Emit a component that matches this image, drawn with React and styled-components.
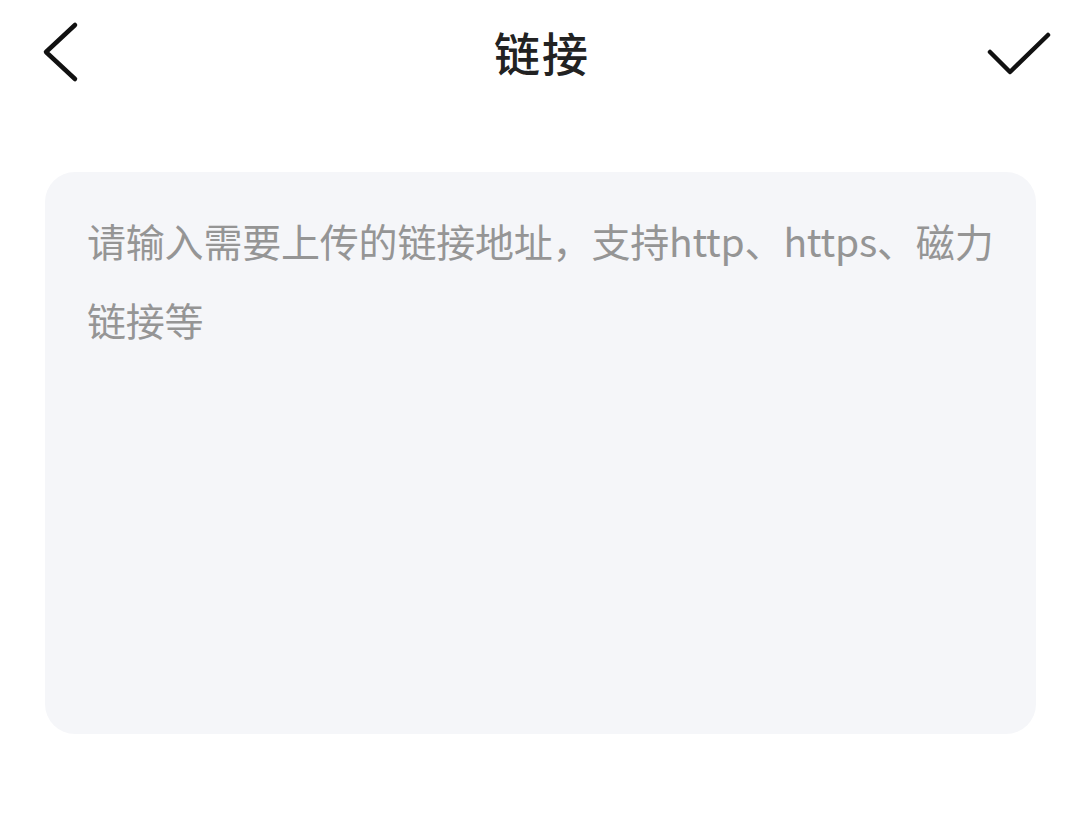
import React from "react";
import styled, { createGlobalStyle } from "styled-components";

const Global = createGlobalStyle`
  html, body { margin: 0; padding: 0; background: #ffffff; }
  body { font-family: "Noto Sans CJK SC", "Noto Sans", sans-serif; }
  * { box-sizing: border-box; }
`;

const Page = styled.div`
  width: 1080px;
  height: 830px;
  background: #ffffff;
  display: flex;
  flex-direction: column;
`;

const Header = styled.header`
  height: 106px;
  display: grid;
  grid-template-columns: 120px 1fr 120px;
  align-items: center;
  padding: 0 28px 0 40px;
`;

const IconButton = styled.button`
  border: 0;
  background: transparent;
  padding: 0;
  display: flex;
  align-items: center;
  justify-content: ${(p) => (p.$end ? "flex-end" : "flex-start")};
  color: #111111;
  cursor: pointer;
`;

const Title = styled.h1`
  margin: -5px 0 0 -8px;
  text-align: center;
  font-size: 46px;
  font-weight: 500;
  color: #222222;
  letter-spacing: 2px;
  line-height: 1;
`;

const Card = styled.div`
  margin: 66px 44px 0 45px;
  height: 562px;
  background: #f5f6f9;
  border-radius: 30px;
  padding: 29px 30px 0 42px;
  display: flex;
`;

const Input = styled.textarea`
  flex: 1;
  border: 0;
  outline: none;
  resize: none;
  background: transparent;
  padding: 0;
  font-family: "Noto Sans CJK SC", "Noto Sans", sans-serif;
  font-size: 39px;
  line-height: 79px;
  letter-spacing: -0.2px;
  color: #333333;
  &::placeholder {
    color: #959595;
    opacity: 1;
  }
`;

export default function App() {
  return (
    <Page>
      <Global />
      <Header>
        <IconButton aria-label="返回">
          <svg width="40" height="64" viewBox="0 0 40 64" fill="none">
            <path d="M35 4 L6 31 L35 58" stroke="currentColor" strokeWidth="4.5" strokeLinecap="round" strokeLinejoin="round" />
          </svg>
        </IconButton>
        <Title>链接</Title>
        <IconButton $end aria-label="确定">
          <svg width="68" height="48" viewBox="0 0 68 48" fill="none">
            <path d="M6 23 L26 43 L64 6" stroke="currentColor" strokeWidth="4.5" strokeLinecap="round" strokeLinejoin="round" />
          </svg>
        </IconButton>
      </Header>
      <Card>
        <Input placeholder="请输入需要上传的链接地址，支持http、https、磁力链接等" />
      </Card>
    </Page>
  );
}
